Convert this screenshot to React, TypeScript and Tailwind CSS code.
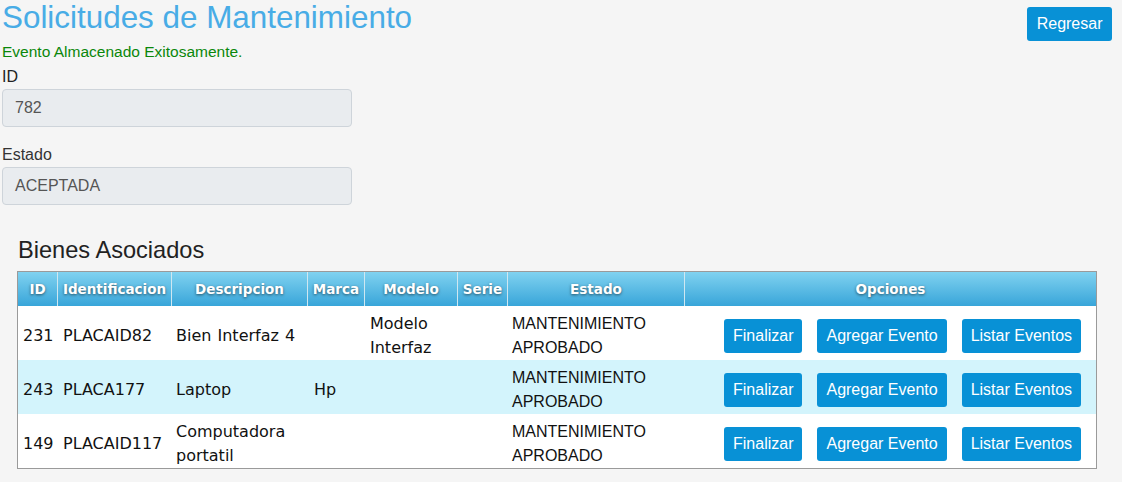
import React from "react";

type Row = {
  id: string;
  ident: string;
  desc: string[];
  marca: string;
  modelo: string[];
  serie: string;
  estado: string[];
};

const rows: Row[] = [
  { id: "231", ident: "PLACAID82", desc: ["Bien Interfaz 4"], marca: "", modelo: ["Modelo", "Interfaz"], serie: "", estado: ["MANTENIMIENTO", "APROBADO"] },
  { id: "243", ident: "PLACA177", desc: ["Laptop"], marca: "Hp", modelo: [], serie: "", estado: ["MANTENIMIENTO", "APROBADO"] },
  { id: "149", ident: "PLACAID117", desc: ["Computadora", "portatil"], marca: "", modelo: [], serie: "", estado: ["MANTENIMIENTO", "APROBADO"] },
];

const headers = ["ID", "Identificacion", "Descripcion", "Marca", "Modelo", "Serie", "Estado", "Opciones"];

const grid = "grid grid-cols-[39px_114px_136px_57px_93px_50px_177px_1fr]";

function Btn({ children }: { children: React.ReactNode }) {
  return (
    <button className="h-[34px] px-[9px] rounded-[3px] bg-[#0891d6] text-white text-[16px] leading-[20px] font-['Liberation_Sans',Arial,sans-serif] whitespace-nowrap">
      {children}
    </button>
  );
}

function Lines({ lines }: { lines: string[] }) {
  return (
    <>
      {lines.map((l, i) => (
        <div key={i}>{l}</div>
      ))}
    </>
  );
}

export default function App() {
  return (
    <div className="min-h-[482px] bg-[#f5f5f5] font-['Liberation_Sans',Arial,sans-serif] text-[#222]">
      <div className="flex justify-between items-start">
        <div className="pl-[2px] w-[352px] flex flex-col">
          <h1 className="text-[31.4px] leading-[36px] text-[#48ace6] whitespace-nowrap">Solicitudes de Mantenimiento</h1>
          <div className="mt-[7px] text-[15.5px] leading-[18px] text-[#0a870a] whitespace-nowrap">Evento Almacenado Exitosamente.</div>
          <label className="mt-[6px] text-[16px] leading-[20px] text-[#222]">ID</label>
          <div className="mt-[2px] h-[38px] border border-[#ced4da] rounded-[4px] bg-[#e9ecef] px-[12px] flex items-center text-[16px] text-[#555]">782</div>
          <label className="mt-[18px] text-[16px] leading-[20px] text-[#333]">Estado</label>
          <div className="mt-[2px] h-[38px] border border-[#ced4da] rounded-[4px] bg-[#e9ecef] px-[12px] flex items-center text-[16px] text-[#555]">ACEPTADA</div>
        </div>
        <button className="mt-[7px] mr-[10px] h-[34px] px-[9.5px] rounded-[3px] bg-[#0891d6] text-white text-[16px] leading-[20px]">Regresar</button>
      </div>

      <h2 className="mt-[31px] ml-[18px] text-[23.6px] leading-[28px] text-[#222]">Bienes Asociados</h2>

      <div className="mt-[7px] ml-[17px] w-[1080px] border border-[#9a9a9a] bg-white">
        <div className={`${grid} h-[34px] bg-[linear-gradient(to_bottom,#80d2f0,#38a5d9)]`}>
          {headers.map((h, i) => (
            <div
              key={h}
              className={`flex items-center justify-center text-white font-bold text-[13.5px] font-['DejaVu_Sans',Verdana,sans-serif] [text-shadow:0_1px_3px_rgba(0,0,0,0.55)] ${i > 0 ? "border-l border-[#cfe7f1]" : ""}`}
            >
              {h}
            </div>
          ))}
        </div>
        {rows.map((r, idx) => (
          <div
            key={r.id}
            className={`${grid} h-[54px] pt-[5px] items-center text-[16px] leading-[24px] text-[#111] font-['DejaVu_Sans',Verdana,sans-serif] ${idx === 1 ? "bg-[#d3f4fc]" : "bg-white"}`}
          >
            <div className="pl-[5px]">{r.id}</div>
            <div className="pl-[6px] whitespace-nowrap">{r.ident}</div>
            <div className="pl-[5px] [word-spacing:1px]"><Lines lines={r.desc} /></div>
            <div className="pl-[7px]">{r.marca}</div>
            <div className="pl-[6px]"><Lines lines={r.modelo} /></div>
            <div className="pl-[6px]">{r.serie}</div>
            <div className="pl-[5px] font-['Liberation_Sans',Arial,sans-serif]"><Lines lines={r.estado} /></div>
            <div className="pl-[40px] flex gap-[15px]">
              <Btn>Finalizar</Btn>
              <Btn>Agregar Evento</Btn>
              <Btn>Listar Eventos</Btn>
            </div>
          </div>
        ))}
      </div>
    </div>
  );
}
